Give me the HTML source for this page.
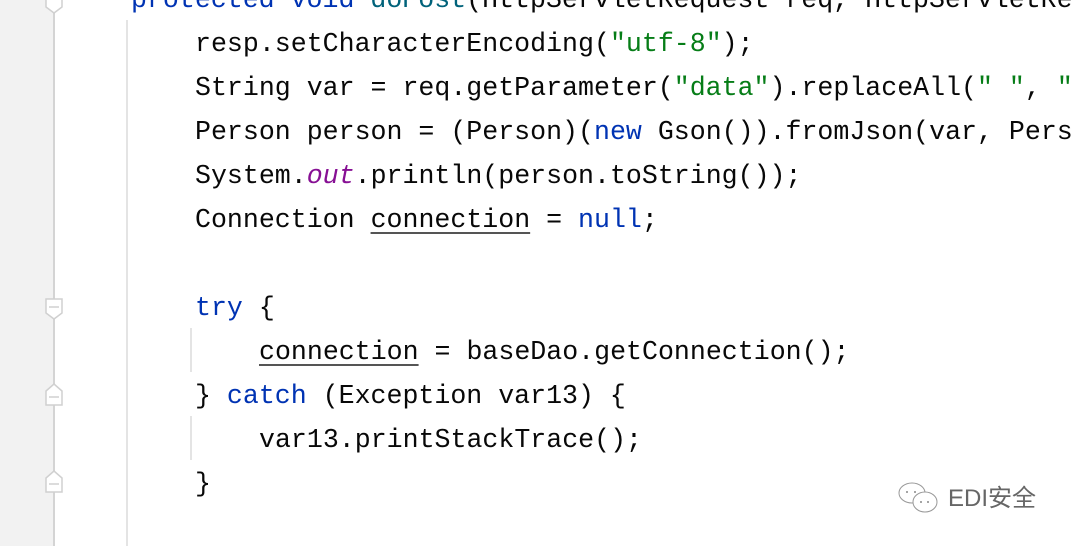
<!DOCTYPE html>
<html><head><style>
body{margin:0;width:1074px;height:546px;overflow:hidden;background:#fff;position:relative;font-family:"Liberation Mono",monospace;}
#c{position:absolute;left:0;top:0;width:1074px;height:546px;overflow:hidden;}
.g{position:absolute;left:0;top:0;width:54px;height:546px;background:#f2f2f2;}
.gl{position:absolute;left:53px;top:0;width:2px;height:546px;background:#d4d4d4;}
.ig{position:absolute;width:2px;background:#e4e4e4;}
.l{position:absolute;left:0;font-size:26.6px;line-height:44px;height:44px;white-space:pre;color:#080808;}
.k{color:#0033b3}.s{color:#067d17}.o{color:#871094;font-style:italic}.m{color:#00627a}
u{text-decoration-color:#555;text-underline-offset:5px}
.f{position:absolute;left:45px}
</style></head><body><div id="c">
<div class="g"></div><div class="gl"></div>
<div class="ig" style="left:126px;top:20px;height:526px"></div>
<div class="ig" style="left:190px;top:328px;height:44px"></div>
<div class="ig" style="left:190px;top:416px;height:44px"></div>
<svg class="f" style="top:-8px" width="18" height="26"><path d="M1 1H17V15L9 21L1 15Z" fill="#fff" stroke="#d0d0d0" stroke-width="1.5"/><path d="M4 7H14" stroke="#d0d0d0" stroke-width="1.5"/></svg>
<svg class="f" style="top:298px" width="18" height="26"><path d="M1 1H17V15L9 21L1 15Z" fill="#fff" stroke="#d0d0d0" stroke-width="1.5"/><path d="M4 9H14" stroke="#d0d0d0" stroke-width="1.5"/></svg>
<svg class="f" style="top:381px" width="18" height="26"><path d="M1 24H17V10L9 3L1 10Z" fill="#fff" stroke="#d0d0d0" stroke-width="1.5"/><path d="M4 16H14" stroke="#d0d0d0" stroke-width="1.5"/></svg>
<svg class="f" style="top:468px" width="18" height="26"><path d="M1 24H17V10L9 3L1 10Z" fill="#fff" stroke="#d0d0d0" stroke-width="1.5"/><path d="M4 16H14" stroke="#d0d0d0" stroke-width="1.5"/></svg>
<div class="l" style="top:-22px;left:131px"><span class="k">protected void </span><span class="m">doPost</span>(HttpServletRequest req, HttpServletRe</div>
<div class="l" style="top:22px;left:195px">resp.setCharacterEncoding(<span class="s">"utf-8"</span>);</div>
<div class="l" style="top:66px;left:195px">String var = req.getParameter(<span class="s">"data"</span>).replaceAll(<span class="s">" "</span>, <span class="s">"</span></div>
<div class="l" style="top:110px;left:195px">Person person = (Person)(<span class="k">new</span> Gson()).fromJson(var, Pers</div>
<div class="l" style="top:154px;left:195px">System.<span class="o">out</span>.println(person.toString());</div>
<div class="l" style="top:198px;left:195px">Connection <u>connection</u> = <span class="k">null</span>;</div>
<div class="l" style="top:286px;left:195px"><span class="k">try</span> {</div>
<div class="l" style="top:330px;left:259px"><u>connection</u> = baseDao.getConnection();</div>
<div class="l" style="top:374px;left:195px">} <span class="k">catch</span> (Exception var13) {</div>
<div class="l" style="top:418px;left:259px">var13.printStackTrace();</div>
<div class="l" style="top:462px;left:195px">}</div>
<svg style="position:absolute;left:897px;top:480px" width="46" height="38"><ellipse cx="15" cy="13" rx="13" ry="10" fill="#fff" stroke="#999" stroke-width="1"/><ellipse cx="28" cy="22" rx="12" ry="10" fill="#fff" stroke="#999" stroke-width="1"/><circle cx="10" cy="12" r="1" fill="#888"/><circle cx="18" cy="12" r="1" fill="#888"/><circle cx="24" cy="22" r="1" fill="#888"/><circle cx="31" cy="22" r="1" fill="#888"/></svg>
<div style="position:absolute;left:948px;top:484px;font-family:'Liberation Sans','Noto Sans CJK SC',sans-serif;font-size:24px;color:#666;line-height:30px">EDI安全</div>
</div></body></html>
